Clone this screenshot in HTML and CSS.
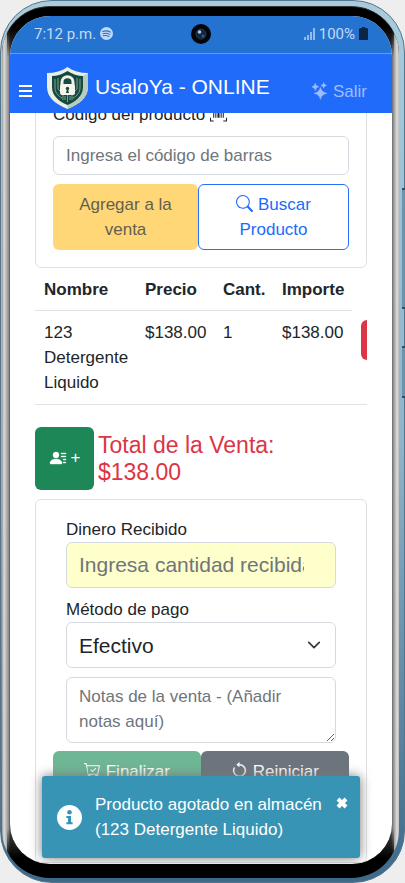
FILE: index.html
```html
<!DOCTYPE html>
<html lang="es">
<head>
<meta charset="utf-8">
<meta name="viewport" content="width=device-width, initial-scale=1">
<title>UsaloYa - ONLINE</title>
<link rel="stylesheet" href="styles.css">
</head>
<body>
<div class="phone">
  <div class="bezel">
    <div class="screen">
      <div class="statusbar">
        <span class="status-group">7:12 p.m.
          <svg class="icon-spotify" viewBox="0 0 16 16" aria-hidden="true"><circle cx="8" cy="8" r="8" fill="currentColor"/><path d="M3.2 5.4c3.4-1 7-.7 9.8.9M3.6 8.2c3-.8 6-.5 8.4.9M4 10.8c2.5-.6 5-.3 7 .8" fill="none" stroke="#2573d0" stroke-width="1.3" stroke-linecap="round"/></svg>
        </span>
        <svg class="camera" viewBox="0 0 20 20" aria-hidden="true"><circle cx="10" cy="10" r="10" fill="#030508"/><circle cx="10" cy="10" r="5" fill="#10263c" stroke="#26384a"/><circle cx="8.5" cy="8" r="1.8" fill="#a9c8e2"/><circle cx="12" cy="12" r="1.5" fill="#315c87"/></svg>
        <span class="status-group status-right">
          <svg class="icon-signal" viewBox="0 0 11 12" aria-hidden="true"><path d="M0 9h2v3H0zM3 7h2v5H3zM6 4h2v8H6zM9 0h2v12H9z" fill="currentColor"/></svg>
          100%
          <svg class="icon-battery" viewBox="0 0 9 13" aria-hidden="true"><path d="M3 0h3v1h2l1 1v11H0V2l1-1h2z" fill="#0b2545"/></svg>
        </span>
      </div>

      <header class="navbar">
        <button class="menu" type="button" aria-label="Menú">
          <svg viewBox="0 0 13 12" aria-hidden="true"><path d="M0 1h13M0 6h13M0 11h13" stroke="#fff" stroke-width="2"/></svg>
        </button>
        <svg class="logo" viewBox="0 0 41 42" aria-hidden="true">
          <path d="M20.5 0C15 4 8 6 0 6v14c0 10 8 17 20.500 22C33 37 41 30 41 20V6C33 6 26 4 20.5 0z" fill="#e9efe3"/>
          <path d="M41 6v14c0 10-8 17-20.500 22v-4C30 33 36 28 36 19V9z" fill="#b9cdbf"/>
          <path d="M20.5 4C16 7 10 9 5 9v11c0 8 6 14 15.500 18C30 34 36 28 36 20V9c-5 0-11-2-15.500-5z" fill="#164a40"/>
          <path d="M8 12v9c0 4 3 8 7 10M11 11v11l5 5v6M33 12v9c0 4-3 8-7 10M30 11v11l-5 5v6M20.500 27v8M18 29v4M23 29v4" fill="none" stroke="#7f9f8d"/>
          <path d="M15 18v-3c0-7 11-7 11 0v3" fill="none" stroke="#eef2e9" stroke-width="3"/>
          <rect x="13" y="17" width="15" height="11" rx="2" fill="#f3f5ed"/>
          <circle cx="20.5" cy="21.5" r="1.7" fill="#164a40"/><path d="M20 22h1l1 4h-3z" fill="#164a40"/>
        </svg>
        <h1 class="brand">UsaloYa - ONLINE</h1>
        <a class="logout" href="#">
          <svg viewBox="0 0 16 18" aria-hidden="true"><path d="M9 5c1 4 3 5.500 7 6.500-4 1-6 2.500-7 6.500-1-4-3-5.500-7-6.500 4-1 6-2.500 7-6.500zM3.500 0.500c.6 2.500 1.500 3.400 4 4C5 5.100 4.100 6 3.500 8.500 2.900 6 2 5.100-.5 4.500 2 3.900 2.900 3 3.500.5zM12.500 0c.4 1.700 1.200 2.500 3 3-1.800.5-2.600 1.300-3 3-.4-1.700-1.200-2.500-3-3 1.800-.5 2.600-1.300 3-3z" fill="currentColor" stroke="currentColor" stroke-width=".5"/></svg>
          Salir
        </a>
      </header>

      <main class="view">
        <div class="content">
          <section class="card product-card">
            <label for="code">Código del producto
              <svg class="icon" viewBox="0 0 16 16" aria-hidden="true"><path d="M.5 4V1h3M12.500 1h3v3M.5 12v3h3M12.500 15h3v-3" fill="none" stroke="currentColor"/><path d="M3 4h1v8H3zM5 4h1v8H5zM7 4h2v8H7zM10 4h1v8h-1zM12 4h1v8h-1z" fill="currentColor"/></svg>
            </label>
            <input class="field" id="code" type="text" placeholder="Ingresa el código de barras">
            <div class="actions">
              <button class="btn btn-add" type="button">Agregar a la venta</button>
              <button class="btn btn-search" type="button"><svg class="icon" viewBox="0 0 16 16" aria-hidden="true"><path fill="currentColor" d="M11.742 10.344a6.500 6.500 0 1 0-1.397 1.398q.044.06.097.115l3.850 3.850a1 1 0 0 0 1.415-1.414l-3.850-3.850a1 1 0 0 0-.115-.1zM12 6.500a5.500 5.500 0 1 1-11 0 5.500 5.500 0 0 1 11 0"/></svg> Buscar Producto</button>
            </div>
          </section>

          <div class="table-wrap">
            <table>
              <colgroup><col class="c-name"><col class="c-price"><col class="c-qty"><col class="c-total"><col class="c-del"></colgroup>
              <thead><tr><th>Nombre</th><th>Precio</th><th>Cant.</th><th>Importe</th></tr></thead>
              <tbody><tr><td>123 Detergente Liquido</td><td>$138.00</td><td>1</td><td>$138.00</td><td><button class="btn-del" type="button" aria-label="Eliminar"></button></td></tr></tbody>
            </table>
          </div>

          <div class="total-row">
            <button class="btn-client" type="button" aria-label="Agregar cliente">
              <svg class="icon-client" viewBox="0 0 16 16" aria-hidden="true"><path fill="currentColor" stroke="currentColor" stroke-width=".4" d="M6 8a3 3 0 1 0 0-6 3 3 0 0 0 0 6m-5 6s-1 0-1-1 1-4 6-4 6 3 6 4-1 1-1 1zM11 3.500a.5.5 0 0 1 .5-.5h4a.5.5 0 0 1 0 1h-4a.5.5 0 0 1-.5-.5m.5 2.500a.5.5 0 0 0 0 1h4a.5.5 0 0 0 0-1zm2 3a.5.5 0 0 0 0 1h2a.5.5 0 0 0 0-1zm0 3a.5.5 0 0 0 0 1h2a.5.5 0 0 0 0-1z"/></svg>
              <span>+</span>
            </button>
            <h2 class="total">Total de la Venta:<br>$138.00</h2>
          </div>

          <section class="card pay-card">
            <div class="pay-fields">
              <label for="cash">Dinero Recibido</label>
              <input class="field field-lg field-cash" id="cash" type="text" placeholder="Ingresa cantidad recibida">
              <label for="method">Método de pago</label>
              <select class="field field-lg" id="method"><option>Efectivo</option></select>
              <textarea class="field" rows="2" aria-label="Notas de la venta" placeholder="Notas de la venta - (Añadir notas aquí)"></textarea>
            </div>
            <div class="actions">
              <button class="btn btn-finish" type="button"><svg class="icon" viewBox="0 0 16 16" aria-hidden="true"><path fill="currentColor" d="M11.354 6.354a.5.5 0 0 0-.708-.708L8 8.293 6.854 7.146a.5.5 0 1 0-.708.708l1.500 1.500a.5.5 0 0 0 .708 0z"/><path fill="currentColor" d="M.5 1a.5.5 0 0 0 0 1h1.110l.401 1.607 1.498 7.985A.5.5 0 0 0 4 12h1a2 2 0 1 0 0 4 2 2 0 0 0 0-4h7a2 2 0 1 0 0 4 2 2 0 0 0 0-4h1a.5.5 0 0 0 .491-.408l1.500-8A.5.5 0 0 0 14.500 3H2.890l-.405-1.621A.5.5 0 0 0 2 1zm3.415 10L3.102 4h10.796l-1.313 7z" fill-rule="evenodd"/></svg> Finalizar</button>
              <button class="btn btn-reset" type="button"><svg class="icon" viewBox="0 0 16 16" aria-hidden="true"><path fill="currentColor" stroke="currentColor" stroke-width=".4" d="M8 3a5 5 0 1 1-4.546 2.914.5.5 0 0 0-.908-.417A6 6 0 1 0 8 2z"/><path fill="currentColor" d="M8 4.466V.534a.25.25 0 0 0-.41-.192L5.230 2.308a.25.25 0 0 0 0 .384l2.360 1.966A.25.25 0 0 0 8 4.466"/></svg> Reiniciar</button>
            </div>
          </section>
        </div>
      </main>

      <div class="toast" role="status">
        <svg class="toast-icon" viewBox="0 0 24 24" aria-hidden="true"><circle cx="12" cy="12" r="12" fill="#fff"/><circle cx="12" cy="7" r="2.2" fill="#3794b4"/><path d="M9 10.500h4.500v6H15v2H9v-2h1.500v-4H9z" fill="#3794b4"/></svg>
        <p>Producto agotado en almacén (123 Detergente Liquido)</p>
        <button class="toast-close" type="button" aria-label="Cerrar"><svg viewBox="0 0 12 12" aria-hidden="true"><path d="M2 2l8 8M10 2l-8 8" stroke="#fff" stroke-width="4"/></svg></button>
      </div>
    </div>
  </div>
  <span class="side-key volume"></span>
  <span class="side-key power"></span>
</div>
</body>
</html>
```
FILE: styles.css
```css
* { box-sizing: border-box; }

body {
  margin: 0;
  background: #eeeeee;
  color: #212529;
  font: 17px/25px "Liberation Sans", Arial, sans-serif;
}

button, input, select, textarea { font: inherit; color: inherit; }
h1, h2, p { margin: 0; font-weight: 400; }

.phone {
  position: relative;
  height: 100vh;
  padding: 5px 5px 4px 1px;
  border: 1px solid #52768c;
  border-radius: 52px;
  background: linear-gradient(#a9cbdc, #8fb5ca 50%, #3e6a8a);
}

.bezel {
  height: 100%;
  padding: 9px 7px 14px 8px;
  border-radius: 48px;
  border-top: 1px solid #333;
  background:
    linear-gradient(#000, #000 20px, transparent 50px, transparent calc(100% - 50px), #000 calc(100% - 20px)) center / calc(100% - 10px) 100% no-repeat,
    linear-gradient(to right, #999 0, #dcdcdc 2px, #bbb 4px, #888 7px, #444 8px, #444 calc(100% - 8px), #888 calc(100% - 6px), #ddd calc(100% - 2px), #bbb 100%);
}

.screen {
  position: relative;
  display: flex;
  flex-direction: column;
  height: 100%;
  overflow: hidden;
  border-radius: 40px;
  background: #fff;
}

.statusbar {
  display: grid;
  grid-template-columns: 1fr 20px 1fr;
  align-items: center;
  flex: none;
  height: 38px;
  padding: 0 24px 2px;
  border-bottom: 1px solid #5f9df3;
  background: #2573d0;
  color: #c3daf4;
  font: 15px/20px Roboto, sans-serif;
}
.status-group { display: flex; align-items: center; gap: 4px; }
.status-right { justify-content: flex-end; }
.icon-spotify { width: 13px; height: 13px; }
.icon-signal { width: 11px; height: 12px; opacity: .7; }
.icon-battery { width: 9px; height: 13px; }
.camera { width: 20px; height: 20px; }

.navbar {
  display: flex;
  align-items: center;
  flex: none;
  height: 59px;
  padding: 9px 25px 0 9px;
  background: #216bfb;
  color: #fff;
}
.menu {
  display: flex;
  margin-top: 6px;
  padding: 0;
  border: 0;
  background: none;
}
.menu svg { width: 13px; height: 12px; }
.logo { width: 41px; height: 42px; margin: 0 7px 0 15px; }
.brand { margin-bottom: 4px; font-size: 21px; white-space: nowrap; }
.logout {
  display: flex;
  align-items: center;
  gap: 6px;
  margin: 6px 0 0 auto;
  color: #9dbefd;
  text-decoration: none;
}
.logout svg { width: 15px; height: 18px; }

.view { flex: 1; min-height: 0; overflow: hidden; }
.content { margin-top: -30px; padding: 0 25px; }

.card {
  border: 1px solid #dee0e2;
  border-radius: 6px;
  padding: 18px 17px 17px;
}
label { display: block; }
.icon { width: 17px; height: 17px; vertical-align: -2px; }

.field {
  display: block;
  width: 100%;
  padding: 6px 12px;
  border: 1px solid #d5dae0;
  border-radius: 6px;
  background: #fff;
}
.field::placeholder { color: #6f757b; opacity: 1; }
.product-card .field { height: 39px; margin: 9px 0; }

.actions { display: flex; }
.btn {
  flex: 1;
  padding: 7px 12px;
  border: 1px solid transparent;
  border-radius: 6px;
}
.btn-add { flex: 0 0 49%; background: #ffd777; color: #655f50; }
.btn-search { border-color: #276ffb; background: #fff; color: #216bfb; }
.btn-finish { background: #6fb695; color: #fff; }
.btn-reset { background: #6c757d; color: #fff; }

.table-wrap { overflow: hidden; }
table { width: 384px; table-layout: fixed; border-collapse: collapse; }
.c-name { width: 101px; }
.c-price { width: 78px; }
.c-qty { width: 59px; }
.c-total { width: 79px; }
th, td {
  padding: 9px 8px 9px 9px;
  border-bottom: 1px solid #e0e2e4;
  text-align: left;
  vertical-align: top;
}
th { padding-bottom: 8px; }
.btn-del {
  display: block;
  width: 44px;
  height: 40px;
  border: 0;
  border-radius: 6px;
  background: #dc3545;
}

.total-row { display: flex; align-items: center; gap: 4px; margin: 22px 0 9px; }
.btn-client {
  display: flex;
  align-items: center;
  justify-content: center;
  gap: 4px;
  flex: none;
  width: 59px;
  height: 63px;
  padding: 0 0 2px;
  border: 0;
  border-radius: 6px;
  background: #1d8757;
  color: #fff;
}
.icon-client { width: 18px; height: 16px; }
.total { color: #dc3545; font-size: 23px; line-height: 27px; }

.pay-card { padding: 17px 17px 70px; }
.pay-fields { padding: 0 13px; }
.field-lg { height: 46px; font-size: 21px; }
.pay-fields .field { margin-bottom: 9px; }
.pay-fields textarea.field { margin-bottom: 8px; }
.field-cash { background: #ffc; }
.pay-card input.field { padding-right: 31px; }
select.field {
  appearance: none;
  background: #fff url("data:image/svg+xml,%3Csvg xmlns='http://www.w3.org/2000/svg' viewBox='0 0 16 16'%3E%3Cpath fill='none' stroke='%23343a40' stroke-width='2' stroke-linecap='round' stroke-linejoin='round' d='m2 5 6 6 6-6'/%3E%3C/svg%3E") right 14px center / 14px 14px no-repeat;
}
textarea.field { height: 66px; resize: vertical; overflow: hidden; }

.toast {
  position: absolute;
  right: 32px;
  bottom: 6px;
  left: 32px;
  display: flex;
  align-items: center;
  gap: 13px;
  min-height: 82px;
  padding: 15px 12px 15px 15px;
  border-radius: 3px;
  background: #3794b4;
  box-shadow: 0 0 12px #777;
  color: #fff;
}
.toast-icon { flex: none; width: 25px; height: 25px; }
.toast p { flex: 1; }
.toast-close {
  display: flex;
  align-self: flex-start;
  margin-top: 6px;
  padding: 0;
  border: 0;
  background: none;
}
.toast-close svg { width: 12px; height: 12px; }

.side-key { position: absolute; right: -1px; width: 3px; background: #6d93aa; border: solid #2e4d63; border-width: 2px 0; }
.volume { top: 187px; height: 121px; }
.power { top: 345px; height: 52px; }
```
